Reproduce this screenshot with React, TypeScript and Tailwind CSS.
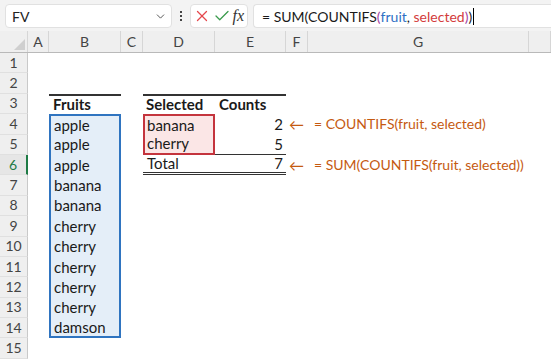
import React from 'react';
import { X, Check, ChevronDown } from 'lucide-react';

const font = { fontFamily: 'Lato, "Open Sans", sans-serif' };
const gridCols = 'grid grid-cols-[28px_21px_72px_22px_72px_71px_22px_221px_22px]';

const fruits = ['apple', 'apple', 'apple', 'banana', 'banana', 'cherry', 'cherry', 'cherry', 'cherry', 'cherry', 'damson'];
const colLetters = ['A', 'B', 'C', 'D', 'E', 'F', 'G', ''];

function Note({ text }: { text: string }) {
    return (
        <div className="flex items-center h-full whitespace-nowrap text-[#c55a11] text-[14px] pl-[3px]">
            <span className="mr-[10px] text-[15px]">←</span>
            <span>{text}</span>
        </div>
    );
}

export default function App() {
    const rows = Array.from({ length: 15 }, (_, i) => i + 1);

    return (
        <div className="w-[551px] h-[360px] overflow-hidden bg-white text-[#1a1a1a]" style={font}>
            {/* Formula bar */}
            <div className="h-[31px] bg-[#f3f3f3] flex items-center pl-[5px] pt-[1px]">
                <div className="w-[167px] h-[24px] bg-white rounded-[4px] border border-[#e1e1e1] flex items-center justify-between pl-[6px] pr-[4px]">
                    <span className="text-[14px] text-[#222]">FV</span>
                    <ChevronDown className="w-[13px] h-[13px] text-[#555]" strokeWidth={1.8} />
                </div>
                <div className="w-[18px] flex flex-col items-center gap-[2px]">
                    <span className="w-[2px] h-[2px] bg-[#444]" />
                    <span className="w-[2px] h-[2px] bg-[#444]" />
                    <span className="w-[2px] h-[2px] bg-[#444]" />
                </div>
                <div className="w-[58px] h-[24px] bg-white rounded-[4px] border border-[#e1e1e1] flex items-center justify-between pl-[2px] pr-[3px]">
                    <X className="w-[18px] h-[18px] text-[#e5484d]" strokeWidth={1.7} />
                    <Check className="w-[18px] h-[18px] text-[#3a9b4c]" strokeWidth={1.7} />
                    <span className="text-[16px] italic text-[#333]" style={{ fontFamily: '"Liberation Serif", serif' }}>fx</span>
                </div>
                <div className="ml-[5px] flex-1 h-[24px] bg-white rounded-l-[4px] border border-r-0 border-[#e1e1e1] flex items-center pl-[8px] text-[14px] whitespace-nowrap">
                    <span>= SUM(COUNTIFS</span>
                    <span className="text-[#a33ea1]">(</span>
                    <span className="text-[#2f6fc4]">fruit</span>
                    <span>,&nbsp;</span>
                    <span className="text-[#d33c3c]">selected</span>
                    <span className="text-[#a33ea1]">)</span>
                    <span>)</span>
                    <span className="w-[1px] h-[17px] bg-black ml-[1px]" />
                </div>
            </div>

            {/* Column headers */}
            <div className={`${gridCols} h-[22px] bg-[#efefef] border-b border-[#b9b9b9]`}>
                <div className="relative border-r border-[#d6d6d6]">
                    <div className="absolute right-[2px] bottom-[2px] w-0 h-0 border-l-[11px] border-l-transparent border-b-[11px] border-b-[#cfcfcf]" />
                </div>
                {colLetters.map((c, i) => (
                    <div key={i} className="flex items-center justify-center text-[14px] text-[#444] border-r border-[#d6d6d6]">
                        {c}
                    </div>
                ))}
            </div>

            {/* Rows */}
            {rows.map((r) => {
                const fruit = r >= 4 && r <= 14 ? fruits[r - 4] : null;
                const active = r === 6;
                return (
                    <div key={r} className={`${gridCols} h-[20.4px] text-[15px] leading-none`}>
                        <div
                            className={`flex items-center justify-center text-[14px] border-b border-[#e0e0e0] ${active ? 'bg-[#e6e6e6] text-[#1e7b45] border-r-2 border-r-[#1e7b45]' : 'bg-[#efefef] text-[#444] border-r border-r-[#c9c9c9]'}`}
                        >
                            {r}
                        </div>
                        <div />
                        {/* B */}
                        {r === 3 ? (
                            <div className="flex items-center pl-[4px] font-bold border-t-2 border-[#333]">Fruits</div>
                        ) : fruit ? (
                            <div
                                className={`flex items-center pl-[3px] bg-[#e4eef8] border-x-2 border-[#2f74c0] ${r === 4 ? 'border-t-2' : ''} ${r === 14 ? 'border-b-2' : ''}`}
                            >
                                {fruit}
                            </div>
                        ) : (
                            <div />
                        )}
                        <div />
                        {/* D */}
                        {r === 3 ? (
                            <div className="flex items-center pl-[3px] font-bold border-t-2 border-[#333]">Selected</div>
                        ) : r === 4 || r === 5 ? (
                            <div
                                className={`flex items-center pl-[2px] bg-[#fbe6e6] border-x-2 border-[#c4343d] ${r === 4 ? 'border-t-2' : 'border-b-2'}`}
                            >
                                {r === 4 ? 'banana' : 'cherry'}
                            </div>
                        ) : r === 6 ? (
                            <div className="flex items-center pl-[4px] border-b-[3px] border-double border-[#333]">Total</div>
                        ) : (
                            <div />
                        )}
                        {/* E */}
                        {r === 3 ? (
                            <div className="flex items-center pl-[4px] font-bold border-t-2 border-[#333]">Counts</div>
                        ) : r === 4 ? (
                            <div className="flex items-center justify-end pr-[3px]">2</div>
                        ) : r === 5 ? (
                            <div className="flex items-center justify-end pr-[3px] border-b border-[#333]">5</div>
                        ) : r === 6 ? (
                            <div className="flex items-center justify-end pr-[3px] border-b-[3px] border-double border-[#333]">7</div>
                        ) : (
                            <div />
                        )}
                        {/* F + G */}
                        <div className="col-span-3">
                            {r === 4 && <Note text="= COUNTIFS(fruit, selected)" />}
                            {r === 6 && <Note text="= SUM(COUNTIFS(fruit, selected))" />}
                        </div>
                    </div>
                );
            })}
        </div>
    );
}
